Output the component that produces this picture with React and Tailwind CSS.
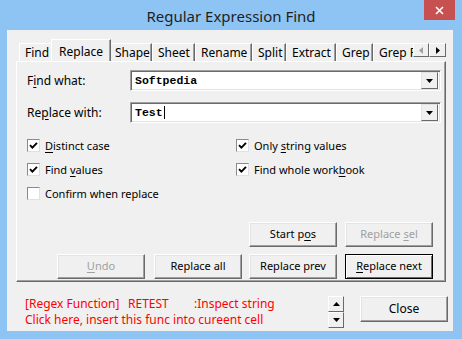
import React from 'react';

const UI = { fontFamily: '"Noto Sans", "Liberation Sans", sans-serif' };
const MONO = { fontFamily: '"Liberation Mono", "Courier New", monospace' };

function Key({ children }) {
  return <span className="underline underline-offset-2">{children}</span>;
}

function Check({ checked }) {
  return (
    <span className="w-[13px] h-[13px] shrink-0 bg-white border border-t-[#8a8a8a] border-l-[#8a8a8a] border-r-[#e0e0e0] border-b-[#e0e0e0] flex items-center justify-center">
      {checked && (
        <svg width="9" height="9" viewBox="0 0 9 9">
          <path d="M1 4.2 L3.4 6.6 L8 1.8" stroke="#000" strokeWidth="1.9" fill="none" />
        </svg>
      )}
    </span>
  );
}

function Option({ checked, children }) {
  return (
    <div className="flex items-center gap-[5px] h-[13px] text-[11px] text-black">
      <Check checked={checked} />
      <span className="leading-none">{children}</span>
    </div>
  );
}

function Btn({ children, className = '', disabled, primary }) {
  return (
    <button
      className={`h-[25px] w-[88px] text-[11px] flex items-center justify-center bg-[#f0f0f0] border ${
        primary
          ? 'border-black shadow-[inset_1px_1px_0_#fff,inset_-1px_-1px_0_#6a6a6a]'
          : 'border-t-white border-l-white border-r-[#6a6a6a] border-b-[#6a6a6a] shadow-[inset_-1px_-1px_0_#a0a0a0,inset_1px_1px_0_#e3e3e3]'
      } ${disabled ? 'text-[#a0a0a0]' : 'text-black'} ${className}`}
      style={UI}
    >
      <span className="whitespace-pre">{children}</span>
    </button>
  );
}

function Combo({ value }) {
  return (
    <div className="h-[21px] flex-1 flex items-center bg-white border border-t-[#a0a0a0] border-l-[#a0a0a0] border-r-white border-b-white shadow-[inset_1px_1px_0_#696969,inset_-1px_-1px_0_#e3e3e3]">
      <span className="flex-1 pl-[4px] text-[11.5px] font-bold text-black flex items-center" style={MONO}>
        {value}
        {value === 'Test' && <span className="inline-block w-px h-[13px] bg-black ml-px" />}
      </span>
      <span className="w-[17px] h-[17px] mr-[2px] bg-[#f0f0f0] border border-t-[#e3e3e3] border-l-[#e3e3e3] border-r-[#696969] border-b-[#696969] flex items-center justify-center">
        <svg width="7" height="4" viewBox="0 0 7 4">
          <path d="M0 0 H7 L3.5 4 Z" fill="#000" />
        </svg>
      </span>
    </div>
  );
}

const tabs = [
  ['Find', 34],
  ['Replace', 56],
  ['Shape', 43],
  ['Sheet', 43],
  ['Rename', 57],
  ['Split', 34],
  ['Extract', 50],
  ['Grep', 37],
  ['Grep Replace', 80],
];

export default function App() {
  return (
    <div className="w-[462px] h-[339px] bg-[#8ec4f3] flex flex-col overflow-hidden" style={UI}>
      {/* title bar */}
      <div className="h-[30px] relative flex items-center justify-center shrink-0">
        <span className="text-[15px] text-[#1f1f1f] mt-[2px]">Regular Expression Find</span>
        <div className="absolute right-[7px] top-0 w-[31px] h-[20px] bg-[#c75050] flex items-center justify-center">
          <svg width="9" height="9" viewBox="0 0 9 9">
            <path d="M1 1 L8 8 M8 1 L1 8" stroke="#fff" strokeWidth="1.6" />
          </svg>
        </div>
      </div>

      {/* client */}
      <div className="ml-[7px] mr-[9px] h-[301px] bg-[#f0f0f0] flex flex-col">
        <div className="mt-[9px] ml-[9px] w-[430px]">
          {/* tab strip */}
          <div className="h-[22px] flex items-end relative">
            <div className="flex items-end pl-[3px] w-[397px] overflow-hidden">
              {tabs.map(([name, w], i) =>
                i === 1 ? (
                  <div
                    key={name}
                    className="h-[23px] -mb-px -mx-[2px] relative z-10 bg-[#f0f0f0] border border-b-0 border-t-white border-l-white border-r-[#696969] shadow-[inset_-1px_0_0_#a0a0a0] flex items-start justify-center pt-[3px] text-[12px] text-black shrink-0"
                    style={{ width: w + 4 }}
                  >
                    {name}
                  </div>
                ) : (
                  <div
                    key={name}
                    className="h-[18px] bg-[#f0f0f0] border border-b-0 border-t-white border-l-white border-r-[#696969] shadow-[inset_-1px_0_0_#a0a0a0] flex items-center justify-start pl-[5px] text-[12px] text-black shrink-0 whitespace-nowrap"
                    style={{ width: w }}
                  >
                    {name}
                  </div>
                )
              )}
            </div>
            <div className="flex mb-[4px]">
              <span className="w-[16px] h-[14px] bg-[#f0f0f0] border border-t-white border-l-white border-r-[#696969] border-b-[#696969] flex items-center justify-center">
                <svg width="4" height="7" viewBox="0 0 4 7"><path d="M4 0 V7 L0 3.5 Z" fill="#a0a0a0" /></svg>
              </span>
              <span className="w-[17px] h-[14px] bg-[#f0f0f0] border border-t-white border-l-white border-r-[#696969] border-b-[#696969] flex items-center justify-center">
                <svg width="4" height="7" viewBox="0 0 4 7"><path d="M0 0 V7 L4 3.5 Z" fill="#000" /></svg>
              </span>
            </div>
          </div>

          {/* panel */}
          <div className="h-[221px] border border-t-white border-l-white border-r-[#696969] border-b-[#696969] shadow-[inset_-1px_-1px_0_#a0a0a0] pt-[8px] pl-[10px] pr-[4px] flex flex-col">
            <div className="flex items-center">
              <span className="w-[103px] text-[12px] text-black">
                F<Key>i</Key>nd what:
              </span>
              <Combo value="Softpedia" />
            </div>
            <div className="flex items-center mt-[11px]">
              <span className="w-[103px] text-[12px] text-black">
                Re<Key>p</Key>lace with:
              </span>
              <Combo value="Test" />
            </div>

            <div className="grid grid-cols-[209px_1fr] gap-y-[11px] mt-[16px]">
              <Option checked>
                <Key>D</Key>istinct case
              </Option>
              <Option checked>
                Only <Key>s</Key>tring values
              </Option>
              <Option checked>
                Find <Key>v</Key>alues
              </Option>
              <Option checked>
                Find whole work<Key>b</Key>ook
              </Option>
              <Option>Confirm when replace</Option>
            </div>

            <div className="mt-[22px] flex flex-col gap-[7px] pr-[8px]">
              <div className="flex justify-end gap-[8px]">
                <Btn>
                  Start p<Key>o</Key>s
                </Btn>
                <Btn disabled>
                  Replace <Key>s</Key>el
                </Btn>
              </div>
              <div className="flex justify-end">
                <Btn disabled>
                  <Key>U</Key>ndo
                </Btn>
                <Btn className="ml-[9px]">Replace all</Btn>
                <Btn className="ml-[7px]">Replace prev</Btn>
                <Btn className="ml-[8px]" primary>
                  <Key>R</Key>eplace next
                </Btn>
              </div>
            </div>
          </div>
        </div>

        {/* bottom */}
        <div className="flex mt-[14px] pl-[18px]">
          <div className="w-[303px] text-[12px] text-[#ff0000] leading-[16px]">
            <div className="flex whitespace-nowrap">
              <span className="w-[103px]">[Regex Function]</span>
              <span className="w-[66px]">RETEST</span>
              <span>:Inspect string</span>
            </div>
            <div className="whitespace-nowrap">Click here, insert this func into cureent cell</div>
          </div>
          <div className="flex flex-col">
            <span className="w-[16px] h-[16px] bg-[#f0f0f0] border border-t-white border-l-white border-r-[#696969] border-b-[#696969] flex items-center justify-center">
              <svg width="7" height="4" viewBox="0 0 7 4"><path d="M0 4 H7 L3.5 0 Z" fill="#000" /></svg>
            </span>
            <span className="w-[16px] h-[16px] bg-[#f0f0f0] border border-t-white border-l-white border-r-[#696969] border-b-[#696969] flex items-center justify-center">
              <svg width="7" height="4" viewBox="0 0 7 4"><path d="M0 0 H7 L3.5 4 Z" fill="#000" /></svg>
            </span>
          </div>
          <Btn className="ml-[16px] h-[26px] text-[12px]">Close</Btn>
        </div>
      </div>
    </div>
  );
}
